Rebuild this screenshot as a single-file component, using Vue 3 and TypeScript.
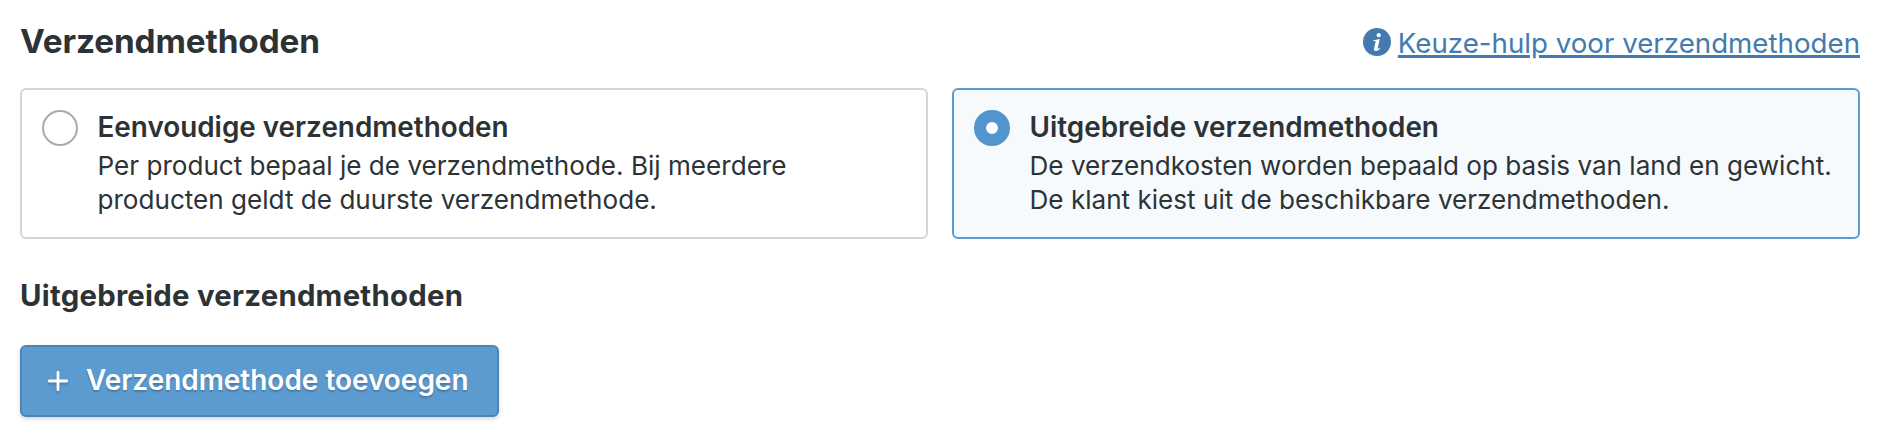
<script setup lang="ts">
import { ref, computed } from 'vue'

interface ShippingMode {
  id: string
  title: string
  lines: string[]
}

const modes: ShippingMode[] = [
  {
    id: 'simple',
    title: 'Eenvoudige verzendmethoden',
    lines: ['Per product bepaal je de verzendmethode. Bij meerdere', 'producten geldt de duurste verzendmethode.'],
  },
  {
    id: 'extended',
    title: 'Uitgebreide verzendmethoden',
    lines: ['De verzendkosten worden bepaald op basis van land en gewicht.', 'De klant kiest uit de beschikbare verzendmethoden.'],
  },
]

const selected = ref('extended')
const activeTitle = computed(() => modes.find((m) => m.id === selected.value)?.title ?? '')
</script>

<template>
  <main class="page">
    <header class="head">
      <h1>Verzendmethoden</h1>
      <a class="help" href="#">
        <svg class="info" viewBox="0 0 28 28" aria-hidden="true">
          <circle cx="14" cy="14" r="14" fill="#437bae" />
          <circle cx="15.7" cy="7.2" r="2.1" fill="#fff" />
          <path d="M10.3 12.2 L16.8 11 L14.7 20.1 Q14.5 21.2 15.3 20.8 L16.8 19.8 L17.2 20.4 Q14.8 22.9 12.8 22.9 Q10.6 22.9 11.1 20.4 L12.6 13.8 Q12.7 13.1 12 13.1 L10.2 13.1 Z" fill="#fff" />
        </svg>
        <span class="help-text">Keuze-hulp voor verzendmethoden</span>
      </a>
    </header>

    <section class="modes" role="radiogroup">
      <div
        v-for="mode in modes"
        :key="mode.id"
        class="card"
        :class="{ active: mode.id === selected }"
        role="radio"
        :aria-checked="mode.id === selected"
        @click="selected = mode.id"
      >
        <span class="radio"></span>
        <div class="body">
          <h2>{{ mode.title }}</h2>
          <p>
            <span v-for="line in mode.lines" :key="line" class="line">{{ line }}</span>
          </p>
        </div>
      </div>
    </section>

    <h3>{{ activeTitle }}</h3>

    <button class="add" type="button">
      <svg class="plus" viewBox="0 0 20 20" aria-hidden="true">
        <path d="M10 1.3V18.7M1.3 10H18.7" stroke="#fff" stroke-width="2.8" stroke-linecap="round" />
      </svg>
      <span class="add-text">Verzendmethode toevoegen</span>
    </button>
  </main>
</template>

<style>
body {
  margin: 0;
  background: #fff;
}
</style>

<style scoped>
.page {
  box-sizing: border-box;
  width: 1886px;
  height: 448px;
  padding: 0 26px 0 20px;
  overflow: hidden;
  color: #2d3335;
  font-family: Inter, "Open Sans", sans-serif;
}
h1, h2, h3, p {
  margin: 0;
}
.head {
  display: flex;
  justify-content: space-between;
  align-items: flex-start;
  height: 88px;
}
h1 {
  padding-top: 20px;
  font-size: 33.3px;
  line-height: 42px;
  font-weight: 700;
  letter-spacing: -0.1px;
}
.help {
  display: flex;
  padding-top: 24px;
  color: #437bae;
  font-size: 27.7px;
  line-height: 38px;
  text-decoration: none;
}
.info {
  width: 28px;
  height: 28px;
  margin: 4px 7px 0 0;
}
.help-text {
  text-decoration: underline;
  text-decoration-thickness: 3px;
  text-underline-offset: 2px;
}
.modes {
  display: grid;
  grid-template-columns: 1fr 1fr;
  gap: 24px;
}
.card {
  box-sizing: border-box;
  display: flex;
  height: 151px;
  padding: 20px;
  border: 2px solid #d6d6d6;
  border-radius: 6px;
  background: #fff;
  white-space: nowrap;
}
.card.active {
  border-color: #5c9dd1;
  background: #f6fafd;
}
.radio {
  box-sizing: border-box;
  flex: none;
  width: 36px;
  height: 36px;
  margin-right: 19.5px;
  border: 2px solid #aaa;
  border-radius: 50%;
  background: #fff;
}
.active .radio {
  border: 12px solid #5294cc;
}
h2 {
  font-size: 27.85px;
  line-height: 34px;
  font-weight: 600;
}
p {
  padding-top: 5px;
  font-size: 26.1px;
  line-height: 34px;
}
.line {
  display: block;
}
h3 {
  margin-top: 38px;
  font-size: 29.3px;
  line-height: 38px;
  font-weight: 700;
  letter-spacing: 0.27px;
}
.add {
  box-sizing: border-box;
  display: flex;
  align-items: center;
  width: 479px;
  height: 72px;
  margin-top: 30px;
  padding: 0 0 0 26px;
  border: 2px solid #4c85b4;
  border-radius: 6px;
  background: #5c9bd0;
  box-shadow: 0 2px 4px rgba(0, 0, 0, 0.16);
  color: #fff;
  font-family: inherit;
  font-size: 27.95px;
  font-weight: 600;
  text-shadow: 0 2px 2px rgba(0, 0, 0, 0.22);
  white-space: nowrap;
}
.add-text {
  padding-bottom: 2px;
}
.plus {
  width: 20px;
  height: 20px;
  margin: 0 18px 1px 0;
  fill: none;
  overflow: visible;
  filter: drop-shadow(0 2px 1px rgba(0, 0, 0, 0.2));
}
</style>
